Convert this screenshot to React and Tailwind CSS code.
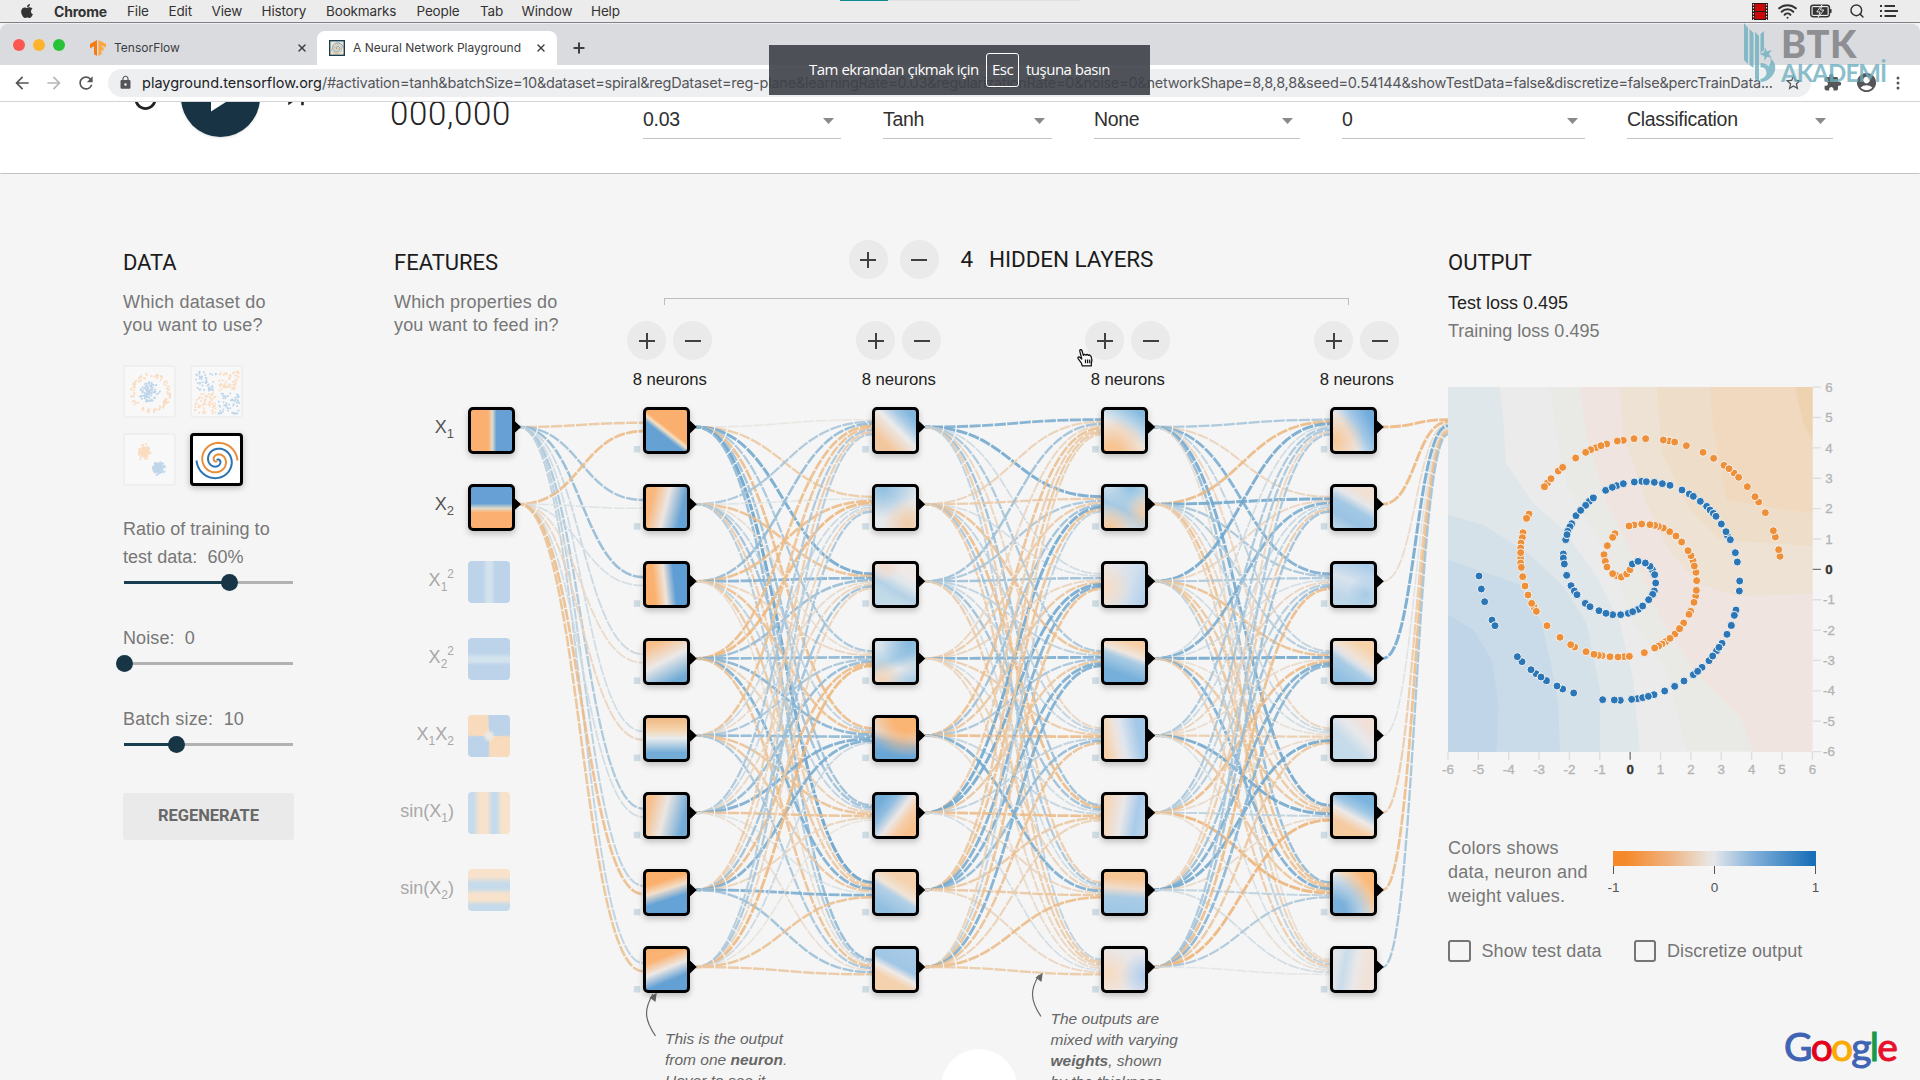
import React from "react";
import { Wifi, Search, X, Plus } from "lucide-react";
import { MdExtension, MdAccountCircle, MdStarBorder, MdLock, MdRefresh, MdArrowBack, MdArrowForward, MdReplay, MdSkipNext } from "react-icons/md";
import { FaApple } from "react-icons/fa";

/* ---------- network geometry (canvas origin: 394,396 on the page) ---------- */
const PITCH = 77.15;
const LAYER_LEFT = [249.3, 477.8, 707.7, 936.3];
const rowY = (i) => 31 + i * PITCH;

function lerpColor(w) {
  const base = [230, 231, 230];
  const end = w > 0 ? [34, 124, 188] : [242, 142, 40];
  const t = Math.min(1, Math.abs(w) * 1.1);
  const c = base.map((b, i) => Math.round(b + (end[i] - b) * t));
  return `rgb(${c[0]},${c[1]},${c[2]})`;
}

const W0 = [
  [-0.35, 0.35, 0.4, 0.15, 0.12, 0.3, 0.22, 0.2],
  [-0.45, 0.05, 0.1, -0.15, -0.2, 0.12, -0.45, -0.4],
];
const W1 = [
  [-0.04, -0.32, 0.55, 0.3, -0.45, 0.35, 0.6, 0.4],
  [0.3, 0.04, -0.42, -0.12, 0.2, 0.35, -0.3, 0.25],
  [0.4, -0.45, 0.48, -0.2, -0.4, 0.2, -0.35, -0.12],
  [-0.45, -0.5, 0.38, 0.45, 0.45, -0.25, 0.5, -0.4],
  [-0.4, 0.15, -0.15, 0.3, 0.42, -0.4, -0.35, 0.3],
  [0.3, 0.15, -0.2, 0.4, 0.52, -0.4, 0.06, -0.12],
  [-0.3, -0.2, 0.35, -0.45, 0.5, -0.22, 0.5, 0.35],
  [0.25, 0.3, -0.22, -0.5, 0.15, -0.06, -0.4, -0.35],
];
const W2 = [
  [0.5, 0.55, 0.12, 0.3, -0.2, 0.35, -0.3, 0.2],
  [-0.25, -0.3, 0.1, -0.4, 0.2, -0.45, 0.3, -0.3],
  [0.35, 0.3, 0.35, 0.2, 0.15, 0.35, 0.12, -0.3],
  [-0.2, -0.3, -0.2, 0.5, -0.3, 0.12, -0.25, -0.2],
  [-0.42, 0.35, -0.35, 0.3, -0.45, 0.18, 0.5, -0.15],
  [-0.3, 0.55, 0.55, -0.35, 0.2, -0.45, -0.2, 0.1],
  [-0.35, -0.4, 0.5, 0.5, 0.4, -0.35, -0.35, -0.2],
  [-0.25, 0.2, -0.4, 0.5, -0.4, -0.25, -0.45, -0.32],
];
const W3 = [
  [0.3, -0.22, 0.5, 0.2, -0.2, 0.55, 0.4, -0.12],
  [-0.48, 0.55, 0.3, 0.25, 0.15, -0.2, -0.4, -0.25],
  [0.55, -0.2, 0.28, -0.4, 0.12, -0.35, -0.4, 0.2],
  [0.12, 0.5, 0.1, 0.55, -0.1, -0.35, 0.5, -0.3],
  [0.3, 0.15, -0.2, -0.15, -0.28, 0.55, -0.35, 0.08],
  [0.3, 0.2, 0.25, -0.45, -0.15, 0.2, -0.52, -0.12],
  [-0.2, -0.3, 0.35, 0.5, 0.55, -0.15, 0.2, 0.12],
  [0.3, 0.35, -0.45, 0.45, -0.35, -0.52, 0.28, 0.03],
];
const W4 = [[-0.5], [-0.5], [-0.15], [0.55], [0.06], [-0.3], [-0.45], [0.32]];

function linksFor(weights, sx, tx) {
  const out = [];
  weights.forEach((row, i) =>
    row.forEach((w, j) => {
      const y1 = rowY(i);
      const n = weights.length;
      const y2 = rowY(j) + ((i - (n - 1) / 2) / n) * 16.8;
      const mx = (sx + tx) / 2;
      out.push({ d: `M${sx},${y1}C${mx},${y1} ${mx},${y2} ${tx},${y2}`, w });
    })
  );
  return out;
}

const LINKS = [
  ...linksFor(W0, 125, 249),
  ...linksFor(W1, 302, 478),
  ...linksFor(W2, 531, 708),
  ...linksFor(W3, 760, 936),
  ...linksFor(W4, 989, 1054),
];

const NODE_BG = [
  [
    "bg-[linear-gradient(218deg,#fbaf6e_46%,#f6e0c4_52%,#66a1d4_60%)]",
    "bg-[linear-gradient(104deg,#f9b77c_18%,#ece6e2_48%,#65a1d4_82%)]",
    "bg-[linear-gradient(84deg,#fbb06e_22%,#f0e4d8_46%,#5f9dd5_68%)]",
    "bg-[linear-gradient(153deg,#f8bf8b_12%,#ebe9e8_48%,#6faad6_88%)]",
    "bg-[linear-gradient(180deg,#f1bd88_5%,#f5d6b0_30%,#e7ebee_50%,#73acd6_85%)]",
    "bg-[linear-gradient(104deg,#f7bf8c_12%,#ebe6e2_45%,#72abd7_86%)]",
    "bg-[linear-gradient(162deg,#fbb06c_26%,#f3dfca_44%,#65a3d6_64%)]",
    "bg-[linear-gradient(158deg,#fbb374_26%,#ede8e4_48%,#63a0d4_72%)]",
  ],
  [
    "bg-[linear-gradient(225deg,#82b7dd_12%,#a9cbe6_28%,#ecebec_46%,#f3c79d_78%)]",
    "bg-[radial-gradient(circle_at_80%_90%,#f2cba6,transparent_50%),radial-gradient(circle_at_20%_0%,#8fbfe1,transparent_60%),linear-gradient(165deg,#c9dce9_5%,#e5e8ea_50%,#e8e6ea_100%)]",
    "bg-[radial-gradient(circle_at_25%_5%,#f1d9cb,transparent_32%),linear-gradient(210deg,#eee9e7_25%,#dfe6eb_40%,#b4d1e6_60%,#c2dae8_75%)]",
    "bg-[radial-gradient(circle_at_15%_95%,#f3d3b8,transparent_42%),radial-gradient(circle_at_85%_5%,#86b9de,transparent_55%),linear-gradient(155deg,#d6e3ec_15%,#afd0e5_45%,#e6e8eb_65%,#a9cce4_95%)]",
    "bg-[radial-gradient(circle_at_75%_0%,#fab474_25%,transparent_75%),linear-gradient(190deg,#f2dcc6_15%,#dfe2e4_40%,#85b5dc_60%,#6aa6d5_85%)]",
    "bg-[linear-gradient(128deg,#72add9_15%,#92bee0_32%,#ece7e6_52%,#f6ceaa_68%,#f8c08c_85%)]",
    "bg-[linear-gradient(212deg,#f5d2ad_25%,#f0e4d8_45%,#b3d0e7_55%,#90bfe0_85%)]",
    "bg-[linear-gradient(208deg,#a8cbe6_8%,#a0c6e6_42%,#efeae6_56%,#f4d2ae_70%)]",
  ],
  [
    "bg-[radial-gradient(circle_at_20%_105%,#f7c492_15%,transparent_68%),linear-gradient(215deg,#86bbe0_10%,#c1d9e9_35%,#ecebed_55%)]",
    "bg-[radial-gradient(circle_at_15%_100%,#f5c79a,transparent_45%),radial-gradient(circle_at_100%_60%,#f5cda8,transparent_42%),radial-gradient(circle_at_65%_0%,#8ec0e2,transparent_50%),linear-gradient(205deg,#d5e2ea_25%,#a4c9e4_55%,#dfe5ea_90%)]",
    "bg-[radial-gradient(circle_at_0%_60%,#f7dcc2,transparent_60%),linear-gradient(110deg,#e5e6ea_20%,#d2e0ee_60%,#b3d0ea_95%)]",
    "bg-[linear-gradient(200deg,#f6cfa4_12%,#efe6df_34%,#a9cbe4_46%,#76b0da_75%)]",
    "bg-[linear-gradient(78deg,#f6d0aa_8%,#efe2d8_32%,#e1e6ee_46%,#a3c8e8_80%)]",
    "bg-[linear-gradient(100deg,#f5d5b6_8%,#e9e7e9_44%,#a8cbea_75%,#bcd4e8_95%)]",
    "bg-[linear-gradient(184deg,#f7c695_18%,#f1dccb_40%,#a9cce6_62%,#a0c8e4_90%)]",
    "bg-[radial-gradient(circle_at_100%_65%,#aecbeb,transparent_50%),radial-gradient(circle_at_10%_60%,#f6dbc0,transparent_58%),linear-gradient(100deg,#ece6e6,#e8e8ec)]",
  ],
  [
    "bg-[radial-gradient(circle_at_0%_75%,#f9c490,transparent_60%),linear-gradient(240deg,#6fabdb_12%,#a9cbe8_42%,#eae9ec_62%)]",
    "bg-[linear-gradient(210deg,#f1e1d2_18%,#e6e6ea_35%,#a2c8e4_52%,#9ac3e3_75%,#bad5e8_95%)]",
    "bg-[radial-gradient(circle_at_80%_75%,#a6cbe6,transparent_42%),linear-gradient(200deg,#abcdea_10%,#d8e3ee_45%,#bdd6e8_80%)]",
    "bg-[linear-gradient(215deg,#f7d2ab_18%,#f1e2d4_40%,#dfe3e8_50%,#a9cce6_62%,#8fbfe0_88%)]",
    "bg-[linear-gradient(225deg,#f2dfd5_15%,#e6e8eb_40%,#c6dcea_62%,#c3daea_90%)]",
    "bg-[linear-gradient(208deg,#7db4de_18%,#9fc7e4_35%,#ece9e8_52%,#f6cba0_72%)]",
    "bg-[radial-gradient(circle_at_0%_100%,#79b1dc_22%,transparent_72%),linear-gradient(235deg,#fbb878_18%,#f4d0ac_38%,#eceaea_58%)]",
    "bg-[linear-gradient(100deg,#dde5ea_15%,#c9dceb_30%,#ebe8e8_55%,#f0e2d8_80%)]",
  ],
];

const SUB = "relative top-[5px] align-baseline text-[12px]";
const SUP = "relative top-[-8px] align-baseline text-[12px]";
const INACTIVE = [
  { label: <>X<sub className={SUB}>1</sub><sup className={SUP}>2</sup></>, bg: "bg-[linear-gradient(90deg,#bdd3ea_35%,#d3e3ee_47%,#d3e3ee_55%,#bdd3ea_65%)]" },
  { label: <>X<sub className={SUB}>2</sub><sup className={SUP}>2</sup></>, bg: "bg-[linear-gradient(180deg,#bdd3ea_35%,#d3e3ee_47%,#d3e3ee_55%,#bdd3ea_65%)]" },
  { label: <>X<sub className={SUB}>1</sub>X<sub className={SUB}>2</sub></>, bg: "bg-[radial-gradient(circle,#eeeae2_8%,transparent_22%),conic-gradient(#bdd3ea_0_24%,#f8dabd_26%_49%,#bdd3ea_51%_74%,#f8dabd_76%_99%,#bdd3ea)]" },
  { label: <>sin(X<sub className={SUB}>1</sub>)</>, bg: "bg-[linear-gradient(90deg,#c5dbeb_12%,#f8e2cb_28%,#f8e2cb_45%,#c5dbeb_58%,#c5dbeb_68%,#f8e2cb_80%)]" },
  { label: <>sin(X<sub className={SUB}>2</sub>)</>, bg: "bg-[linear-gradient(180deg,#f8e2cb_18%,#c5dbeb_34%,#c5dbeb_46%,#f8e2cb_60%,#f8e2cb_74%,#c5dbeb_86%)]" },
];

const ORANGE = [1080,560,1076,540,1066,502,1060,483,1036,429,1016,397,1005,381,982,351,942,310,956,323,912,287,927,297,881,266,849,248,799,228,747,214,764,217,730,211,677,207,642,207,610,212,592,214,560,223,528,234,543,228,512,240,497,248,467,265,415,304,428,293,382,340,393,327,373,351,327,433,320,446,309,489,307,504,303,520,302,535,302,565,302,549,302,580,304,593,308,621,315,649,324,676,342,712,335,701,349,725,381,768,420,803,464,832,452,825,498,846,546,858,535,857,522,854,570,861,612,861,594,862,628,860,673,849,737,816,726,823,716,829,704,835,765,793,750,806,791,760,779,777,812,725,807,734,827,679,822,698,829,662,819,573,828,608,830,633,823,589,813,558,804,543,785,517,768,499,749,486,730,475,715,470,704,467,642,466,690,465,665,463,627,469,585,492,578,503,552,555,562,528,556,575,561,592,590,618,578,612,604,622,620,613,630,600];
const BLUE = [177,619,184,658,194,696,216,751,225,768,306,876,292,861,348,912,333,900,379,933,363,922,428,958,411,949,461,970,548,990,601,992,583,991,652,987,668,984,635,989,702,975,685,980,734,964,764,950,792,934,820,915,846,893,833,905,867,873,890,843,878,859,906,821,897,833,921,794,934,767,948,721,943,737,958,664,959,634,952,577,946,549,922,497,931,510,918,486,904,463,860,410,870,421,880,431,888,440,808,373,841,395,820,380,786,361,750,347,727,342,703,338,665,335,679,336,643,337,590,348,610,342,557,362,577,353,508,395,497,407,520,385,468,438,482,422,455,462,450,471,437,510,443,485,441,495,430,553,430,565,433,583,440,617,453,648,463,664,471,675,496,701,510,711,537,723,578,735,558,731,602,735,625,731,655,719,638,726,668,709,703,664,698,674,686,690,707,640,697,600,704,615,690,590,637,583,676,580,654,575];

function Dots({ pts, fill }) {
  const out = [];
  for (let i = 0; i < pts.length; i += 2)
    out.push(<circle key={i} cx={pts[i]} cy={pts[i + 1]} r="12" fill={fill} stroke="#f3f3f3" strokeWidth="3" />);
  return <>{out}</>;
}

function rng(seed) {
  let s = seed;
  return () => ((s = (s * 16807) % 2147483647) / 2147483647);
}

function Thumb({ kind }) {
  const r = rng(kind.length * 977 + 5);
  const dots = [];
  const O = "#fbdcc0", B = "#bfd6ea";
  if (kind === "circle") {
    for (let i = 0; i < 110; i++) {
      const a = r() * 6.283, q = r() * 10.5;
      dots.push([26.5 + q * Math.cos(a), 27 + q * Math.sin(a), B]);
      const b = r() * 6.283, p = 15.5 + r() * 4.5;
      dots.push([27.5 + p * Math.cos(b), 28 + p * Math.sin(b), O]);
    }
  } else if (kind === "xor") {
    for (let i = 0; i < 250; i++) {
      const x = 5 + r() * 44, y = 6 + r() * 43;
      if (Math.abs(x - 27) < 1.2 || Math.abs(y - 27) < 1.2) continue;
      dots.push([x, y, (x < 27) === (y < 27) ? B : O]);
    }
  } else {
    for (let i = 0; i < 110; i++) {
      const g = () => (r() + r() + r() - 1.5) * 5.6;
      dots.push([20.5 + g(), 19 + g(), O]);
      dots.push([35.5 + g(), 35 + g(), B]);
    }
  }
  return (
    <div className="h-[53px] w-[53px] rounded-[3px] border-2 border-[#efefef] bg-[#f8f8f8]">
      <svg viewBox="2 2 49 49" className="block h-[49px] w-[49px]">
        {dots.map((d, i) => <circle key={i} cx={d[0]} cy={d[1]} r="1" fill={d[2]} />)}
      </svg>
    </div>
  );
}

function spiral(delta) {
  let d = "";
  for (let i = 2; i <= 120; i++) {
    const u = i / 120, t = 1.75 * u * 2 * Math.PI + delta, q = u * 20.5;
    d += `${i === 2 ? "M" : "L"}${(27 - q * Math.sin(t)).toFixed(2)},${(27.5 + q * Math.cos(t)).toFixed(2)}`;
  }
  return d;
}

function RoundBtn({ minus }) {
  return (
    <div className="flex h-[39px] w-[39px] items-center justify-center rounded-full bg-[#eaeaea]">
      <svg viewBox="0 0 18 18" className="h-[18px] w-[18px]" stroke="#404040" strokeWidth="2">
        <path d={minus ? "M1 9h16" : "M1 9h16M9 1v16"} />
      </svg>
    </div>
  );
}

function Select({ value, w }) {
  return (
    <div className={`flex h-[37px] items-start justify-between border-b-[1.5px] border-[#c4c4c4] pt-[4px] pr-[7px] ${w}`}>
      <span className="text-[19.500px] leading-[26px] tracking-[-0.300px] text-[#303030]">{value}</span>
      <svg viewBox="0 0 11 6" className="mt-[12px] h-[6px] w-[11px]"><path d="M0 0h11L5.500 6z" fill="#8a8a8a" /></svg>
    </div>
  );
}

function Slider({ left, fillW }) {
  return (
    <div className="relative ml-px h-[17px] w-[169px]">
      <div className="absolute top-[7px] h-[3px] w-full bg-[#b2b2b2]" />
      <div className={`absolute top-[7px] h-[3px] bg-[#183d4e] ${fillW}`} />
      <div className={`absolute top-0 h-[17px] w-[17px] rounded-full bg-[#183546] ${left}`} />
    </div>
  );
}

function Node({ bg }) {
  return <div className={`h-[47px] w-[47px] rounded-[5px] border-[3px] border-black shadow-[0_3px_6px_rgba(0,0,0,0.22)] ${bg}`} />;
}

const MENU = [["File", "w-[41.5px]"], ["Edit", "w-[43px]"], ["View", "w-[50px]"], ["History", "w-[64.500px]"], ["Bookmarks", "w-[90.500px]"], ["People", "w-[63.500px]"], ["Tab", "w-[41.500px]"], ["Window", "w-[69.500px]"], ["Help", "w-[60px]"]];

function MenuBar() {
  return (
    <div className="flex h-[23px] items-center border-b border-[#808086] bg-[#ececec] font-['Inter'] text-[13.500px] text-[#333]">
      <FaApple className="ml-[20px] h-[16px] w-[14px]" />
      <span className="ml-[20px] w-[73px] text-[14px] font-bold tracking-[-0.200px]">Chrome</span>
      {MENU.map(([m, w]) => <span key={m} className={`shrink-0 tracking-[-0.150px] ${w}`}>{m}</span>)}
      <div className="mr-[22px] ml-auto flex items-center">
        <svg viewBox="0 0 16 17" className="mr-[9px] h-[17px] w-[16px]">
          <rect width="16" height="17" fill="#2a1414" /><rect x="3" y="1" width="10" height="7" fill="#cc0707" /><rect x="3" y="9" width="10" height="7" fill="#cc0707" />
          <path d="M1.500 1v16M14.500 1v16" stroke="#ddd" strokeWidth="1.200" strokeDasharray="1.500 1.500" />
        </svg>
        <Wifi className="mr-[12px] h-[20px] w-[21px]" strokeWidth={2.4} />
        <svg viewBox="0 0 24 14" className="mr-[16px] h-[14px] w-[23px]">
          <rect x="0.800" y="1" width="19.500" height="12" rx="2.500" fill="none" stroke="#333" strokeWidth="1.500" />
          <rect x="2.800" y="3" width="15.500" height="8" fill="#333" /><path d="M21.500 5v4" stroke="#333" strokeWidth="2" />
          <path d="M12.500 0.500L7 8h3.500L8.500 13.500 14.500 6H11z" fill="#333" stroke="#ececec" strokeWidth="1" />
        </svg>
        <Search className="mr-[15px] h-[16px] w-[16px]" strokeWidth={2.2} />
        <svg viewBox="0 0 18 12" className="h-[12px] w-[18px]" stroke="#333" strokeWidth="2"><path d="M0 1h2M4.500 1H15M0 6h2M4.500 6H18M0 11h2M4.500 11H16" /></svg>
      </div>
    </div>
  );
}

function Tabs() {
  return (
    <div className="flex h-[42px] items-end rounded-t-lg border-t border-[#f0f0f2] bg-[#dadbdf] font-['Inter'] text-[12px] text-[#3c3c40]">
      <div className="mb-[14px] ml-[13px] flex gap-[8px]">
        <i className="h-[12px] w-[12px] rounded-full bg-[#fc5650]" /><i className="h-[12px] w-[12px] rounded-full bg-[#fdb42c]" /><i className="h-[12px] w-[12px] rounded-full bg-[#28c238]" />
      </div>
      <div className="flex h-[34px] w-[252px] items-center pl-[25px]">
        <svg viewBox="0 0 16 16" className="h-[16px] w-[16px]"><path d="M0 4l7-4v16l-3-1.800V6.200L0 8.300z" fill="#f57c14" /><path d="M16 4L8.500 0v16l3-1.800V9.700l2 1.200V7.700l-2-1.200V5.400L16 7.600z" fill="#fca63c" /></svg>
        <span className="ml-[8px] w-[182px]">TensorFlow</span>
        <X className="h-[12px] w-[12px]" strokeWidth={2.8} />
      </div>
      <div className="flex h-[34px] w-[240px] items-center rounded-t-lg bg-white pl-[12px]">
        <svg viewBox="0 0 53 53" className="h-[16px] w-[16px]"><rect x="2" y="2" width="49" height="49" fill="#e9e5d8" stroke="#183d4e" strokeWidth="5" /><path d={spiral(0)} fill="none" stroke="#4a90c4" strokeWidth="3" /><path d={spiral(Math.PI)} fill="none" stroke="#d9a66c" strokeWidth="3" /></svg>
        <span className="ml-[8px] w-[182px] whitespace-nowrap">A Neural Network Playground</span>
        <X className="h-[12px] w-[12px]" strokeWidth={2.8} />
      </div>
      <Plus className="mb-[9px] ml-[14px] h-[16px] w-[16px]" strokeWidth={3} />
    </div>
  );
}

function Toolbar() {
  return (
    <div className="flex h-[37px] items-center border-b border-[#d4d4d6] bg-white pb-px text-[#55565a]">
      <MdArrowBack className="ml-[12px] h-[20px] w-[20px]" />
      <MdArrowForward className="ml-[12px] h-[20px] w-[20px] text-[#b8b8ba]" />
      <MdRefresh className="ml-[12px] h-[20px] w-[20px]" />
      <div className="ml-[12px] flex h-[28px] w-[1703px] items-center rounded-full bg-[#eeeff1] pl-[10px]">
        <MdLock className="h-[15px] w-[15px]" />
        <span className="ml-[9px] w-[1642px] shrink-0 font-['Inter'] text-[14.500px] tracking-[-0.240px] whitespace-nowrap">
          <span className="tracking-normal text-[#202124]">playground.tensorflow.org</span>/#activation=tanh&amp;batchSize=10&amp;dataset=spiral&amp;regDataset=reg-plane&amp;learningRate=0.03&amp;regularizationRate=0&amp;noise=0&amp;networkShape=8,8,8,8&amp;seed=0.54144&amp;showTestData=false&amp;discretize=false&amp;percTrainData...
        </span>
        <MdStarBorder className="h-[19px] w-[19px] shrink-0" />
      </div>
      <MdExtension className="ml-[12px] h-[19px] w-[19px]" />
      <MdAccountCircle className="ml-[13px] h-[23px] w-[23px]" />
      <svg viewBox="0 0 4 14" className="ml-[18px] h-[14px] w-[4px]" fill="#55565a"><circle cx="2" cy="2" r="1.500" /><circle cx="2" cy="7" r="1.500" /><circle cx="2" cy="12" r="1.500" /></svg>
    </div>
  );
}

function Controls() {
  return (
    <div className="relative z-10 h-[72px] overflow-hidden">
      <div className="flex h-[71px] items-start bg-white shadow-[0_1px_2px_rgba(0,0,0,0.300)]">
        <div className="flex h-[71px] w-[390px] items-start">
          <MdReplay className="-mt-[21px] ml-[129px] h-[33px] w-[33px] text-[#222]" />
          <div className="-mt-[44px] ml-[19px] flex h-[79px] w-[79px] items-center justify-center rounded-full bg-[#183444] shadow">
            <svg viewBox="0 0 24 28" className="ml-[5px] h-[29px] w-[24px]"><path d="M0 0l22 14L0 28z" fill="#fff" /></svg>
          </div>
          <MdSkipNext className="-mt-[20px] ml-[19px] h-[31px] w-[34px] text-[#222]" />
        </div>
        <div className="-mt-[9px] w-[253px] font-['Roboto'] text-[33px] leading-[42px] font-light tracking-[0.700px] text-[#222]">000,000</div>
        <div className="flex gap-[42px]">
          <Select value="0.03" w="w-[198px]" />
          <Select value="Tanh" w="w-[169px]" />
          <Select value="None" w="w-[206px]" />
          <Select value="0" w="w-[243px]" />
          <Select value="Classification" w="w-[206px]" />
        </div>
      </div>
    </div>
  );
}

function DataColumn() {
  return (
    <div className="w-[270.500px] text-[18px] text-[#777]">
      <h2 className="font-['Roboto'] text-[22px] leading-[26px] tracking-[-0.100px] text-[#1c1c1c]">DATA</h2>
      <p className="mt-[15px] leading-[23px] tracking-[0.230px]">Which dataset do<br />you want to use?</p>
      <div className="mt-[28px] grid w-[121px] grid-cols-[53px_53px] gap-x-[14px] gap-y-[15px]">
        <Thumb kind="circle" />
        <Thumb kind="xor" />
        <Thumb kind="gauss" />
        <div className="h-[53px] w-[53px] rounded-[4px] border-[3px] border-black bg-white shadow-[0_2px_6px_rgba(0,0,0,0.25)]">
          <svg viewBox="3 3 47 47" className="block h-[47px] w-[47px]" fill="none" strokeWidth="2">
            <path d={spiral(Math.PI)} stroke="#2a74b4" /><path d={spiral(0)} stroke="#e58e3c" />
          </svg>
        </div>
      </div>
      <p className="mt-[29px] leading-[28px] tracking-[0.030px]">Ratio of training to<br />test data:&nbsp; 60%</p>
      <div className="mt-[3px]"><Slider fillW="w-[105px]" left="left-[97px]" /></div>
      <p className="mt-[33px] leading-[28px] tracking-[0.100px]">Noise:&nbsp; 0</p>
      <div className="mt-[3px]"><Slider fillW="w-0" left="left-[-8px]" /></div>
      <p className="mt-[33px] leading-[28px] tracking-[0.200px]">Batch size:&nbsp; 10</p>
      <div className="mt-[3px]"><Slider fillW="w-[52px]" left="left-[44px]" /></div>
      <div className="mt-[40px] flex h-[47px] w-[171px] items-center justify-center rounded-[3px] bg-[#eaeaea] font-['Roboto'] text-[16.500px] font-bold tracking-[-0.050px] text-[#686868]">REGENERATE</div>
    </div>
  );
}

function Network() {
  return (
    <div className="relative h-[685px] w-[1054px]">
      <svg viewBox="0 0 1054 685" className="absolute inset-0 h-[685px] w-[1054px]" fill="none">
        {LINKS.map((l, i) => (
          <path key={i} d={l.d} stroke={lerpColor(l.w)} strokeOpacity="0.88" strokeWidth={1.4 + Math.abs(l.w) * 2.9} strokeDasharray="11.200 1.400" strokeDashoffset="6" />
        ))}
        {LAYER_LEFT.map((x, l) =>
          NODE_BG[l].map((_, i) => (
            <g key={`${l}-${i}`}>
              <path d={`M${x + 46},${rowY(i) - 7}l7.5,7l-7.5,7z`} fill="#000" />
              <rect x={x - 9.5} y={rowY(i) + 19} width="6.500" height="6.500" fill="#cddbe3" />
            </g>
          ))
        )}
        {[0, 1].map((i) => <path key={i} d={`M119.5,${rowY(i) - 7}l7.500,7l-7.500,7z`} fill="#000" />)}
        <g stroke="#666" strokeWidth="1.200" transform="translate(0 -1)">
          <path d="M261.500 641C250 624 250 614 259 599" /><path d="M262 599l-1 7-4.500-3.500z" fill="#666" />
          <path d="M647 621.500C636 605 636 595 645 580" /><path d="M648 579l-1 7-4.500-3.500z" fill="#666" />
        </g>
      </svg>
      <div className="absolute top-[10.500px] left-0 flex w-[121px] flex-col gap-[30.150px]">
        {["1", "2"].map((n) => (
          <div key={n} className="flex h-[47px] items-start justify-end">
            <span className="mt-[10px] mr-[14px] text-[18px] leading-[20px] text-[#555]">X<sub className="relative top-[5px] align-baseline text-[13px]">{n}</sub></span>
            <Node bg={n === "1" ? "bg-[linear-gradient(90deg,#fbb072_42%,#e0dccb_52%,#66a0d4_62%)]" : "bg-[linear-gradient(180deg,#66a0d4_40%,#e0dccb_52%,#fbb072_62%)]"} />
          </div>
        ))}
        {INACTIVE.map((f, i) => (
          <div key={i} className="flex h-[47px] items-start justify-end pr-[5px]">
            <span className="mt-[9px] mr-[14px] text-[18px] leading-[20px] text-[#a8a8a8]">{f.label}</span>
            <div className={`h-[42px] w-[42px] rounded-[4px] ${f.bg}`} />
          </div>
        ))}
      </div>
      <div className="absolute top-[10.500px] left-[249.300px] flex gap-[182px]">
        {NODE_BG.map((col, l) => (
          <div key={l} className="flex flex-col gap-[30.150px]">{col.map((bg, i) => <Node key={i} bg={bg} />)}</div>
        ))}
      </div>
      <p className="absolute top-[632px] left-[271px] w-[140px] text-[15.500px] leading-[21px] text-[#666] italic">This is the output<br />from one <b>neuron</b>.<br />Hover to see it</p>
      <p className="absolute top-[612px] left-[656.500px] w-[150px] text-[15.500px] leading-[21px] text-[#666] italic">The outputs are<br />mixed with varying<br /><b>weights</b>, shown<br />by the thickness</p>
    </div>
  );
}

function Center() {
  return (
    <div className="ml-[0.500px] w-[1054px]">
      <div className="flex h-[146px]">
        <div className="w-[239px]">
          <h2 className="font-['Roboto'] text-[22px] leading-[26px] tracking-[0px] text-[#1c1c1c]">FEATURES</h2>
          <p className="mt-[15px] text-[18px] leading-[23px] tracking-[0.180px] text-[#777]">Which properties do<br />you want to feed in?</p>
        </div>
        <div className="w-[815px]">
          <div className="-mt-[10px] ml-[215.500px] flex items-center">
            <RoundBtn /><div className="w-[12px]" /><RoundBtn minus />
            <div className="-mt-[2px] ml-[22px] flex gap-[16px] font-['Roboto'] text-[22.500px] leading-[26px] tracking-[-0.100px] text-[#1c1c1c]"><span>4</span><span>HIDDEN LAYERS</span></div>
          </div>
          <div className="mt-[19px] ml-[31px] h-[7px] w-[685px] border-[1.500px] border-b-0 border-[#bdbdbd]" />
          <div className="mt-[16px] -ml-[6px] flex gap-[143.500px]">
            {[0, 1, 2, 3].map((i) => (
              <div key={i} className="flex w-[85.500px] flex-col items-center">
                <div className="flex gap-[7px]"><RoundBtn /><RoundBtn minus /></div>
                <span className="mt-[9px] text-[16.700px] leading-[22px] whitespace-nowrap text-[#222]">8 neurons</span>
              </div>
            ))}
          </div>
        </div>
      </div>
      <Network />
    </div>
  );
}

const BANDS_LEFT = [
  ["M84,52H390L410,200L440,350L520,480L590,620L640,760L740,900L800,1146H84z", "#ebebeb"],
  ["M84,52H240L250,150L258,280L340,400L430,480L530,620L600,760L640,930L660,1146H84z", "#e0e7ea"],
  ["M84,435L190,465L330,555L430,650L500,760L540,960L540,1146H84z", "#d5e1e9"],
  ["M84,570L200,610L300,645L365,760L392,880L415,1000L420,1146H84z", "#c9dae8"],
  ["M84,735L160,780L215,870L235,1000L230,1146H84z", "#c0d6e8"],
];
const BANDS_RIGHT = [
  ["M480,52L500,200L560,400L640,560L720,740L820,900L960,1040L1000,1146H1177V52z", "#efe4df"],
  ["M600,52L610,200L680,400L740,530L830,640L950,680L1177,672V52z", "#eee2d4"],
  ["M710,52L725,250L810,420L900,510L1177,530V52z", "#eedec9"],
  ["M870,52L880,180L920,390L1030,410L1177,430V52z", "#f0d9bf"],
  ["M1125,52L1150,160L1177,210V52z", "#efd2b0"],
];
const TICKS = [6, 5, 4, 3, 2, 1, 0, -1, -2, -3, -4, -5, -6];

function Output() {
  return (
    <div className="flex-1">
      <h2 className="font-['Roboto'] text-[22px] leading-[26px] tracking-[0px] text-[#1c1c1c]">OUTPUT</h2>
      <p className="mt-[13px] text-[18px] leading-[28px] text-[#222]">Test loss 0.495</p>
      <p className="text-[18px] leading-[28px] text-[#777]">Training loss 0.495</p>
      <svg viewBox="60 40 1200 1190" className="mt-[38px] -ml-[8px] block h-[396.700px] w-[400px]">
        <rect x="84" y="52" width="1093" height="1094" fill="#e9e9e5" />
        {[...BANDS_LEFT, ...BANDS_RIGHT].map((b, i) => <path key={i} d={b[0]} fill={b[1]} />)}
        <Dots pts={ORANGE} fill="#ef9038" />
        <Dots pts={BLUE} fill="#2a76b6" />
        {TICKS.map((t) => {
          const y = 599 - t * 91.1, x = 630.5 + t * 91.1, z = t === 0;
          return (
            <g key={t} className="font-['Liberation_Sans']" fontSize="40" fill={z ? "#333" : "#b4b4b4"} stroke={z ? "#333" : "#b4b4b4"} strokeWidth="1">
              <path d={`M1178,${y}h25M${x},1147v23`} stroke={z ? "#777" : "#ddd"} strokeWidth="4" />
              <text x="1227" y={y + 14} textAnchor="middle" fontWeight={z ? 700 : 400}>{t}</text>
              <text x={x} y="1214" textAnchor="middle" fontWeight={z ? 700 : 400}>{t}</text>
            </g>
          );
        })}
      </svg>
      <div className="mt-[56px] flex">
        <p className="w-[158px] text-[18px] leading-[24px] tracking-[0.220px] text-[#777]">Colors shows<br />data, neuron and<br />weight values.</p>
        <div className="mt-[15px] w-[217px]">
          <div className="ml-[7px] h-[15px] w-[203px] bg-[linear-gradient(90deg,#f5892a_6%,#efb17c_27%,#e8e4df_47%,#e3e6ea_50%,#7eaed8_70%,#1a6fb8_98%)]" />
          <div className="ml-[7px] flex h-[8px] w-[203px] justify-between"><i className="w-px bg-[#555]" /><i className="w-px bg-[#555]" /><i className="w-px bg-[#555]" /></div>
          <div className="mt-[5px] flex justify-between text-[13.500px] leading-[18px] text-[#555]"><span className="w-[15px] text-center">-1</span><span className="w-[15px] text-center">0</span><span className="w-[15px] text-center">1</span></div>
        </div>
      </div>
      <div className="mt-[32px] flex h-[23px] items-center text-[18px] tracking-[0.080px] text-[#757575]">
        <i className="mr-[11px] h-[22.500px] w-[22.500px] rounded-[3px] border-[2.500px] border-[#757575]" /><span className="w-[152px]">Show test data</span>
        <i className="mr-[11px] h-[22.500px] w-[22.500px] rounded-[3px] border-[2.500px] border-[#757575]" /><span>Discretize output</span>
      </div>
      <div className="mt-[56px] ml-[336px] flex font-['Lato'] text-[39px] leading-[54px] tracking-[-1.800px] [-webkit-text-stroke:1px]">
        <span className="text-[#3f64b4]">G</span><span className="text-[#e3001b]">o</span><span className="text-[#f9ab00]">o</span><span className="text-[#3f64b4]">g</span><span className="text-[#169a48]">l</span><span className="text-[#e8112d]">e</span>
      </div>
    </div>
  );
}

export default function App() {
  return (
    <div className="relative flex h-[1080px] w-[1920px] flex-col overflow-hidden bg-[#f5f5f5] font-['Liberation_Sans',sans-serif]">
      <MenuBar />
      <Tabs />
      <Toolbar />
      <Controls />
      <div className="flex h-[906px] items-start overflow-hidden pt-[76px] pl-[123px]">
        <DataColumn />
        <Center />
        <Output />
      </div>

      <div className="absolute top-[1049px] left-[941px] h-[76px] w-[76px] rounded-full bg-white" />
      <svg viewBox="0 0 16 18" className="absolute top-[348px] left-[1077px] z-20 h-[19px] w-[17px]" fill="#fff" stroke="#111" strokeWidth="1.200" strokeLinejoin="round">
        <path d="M5 17l-1-3-3-4c-.6-1.200.8-2 1.600-1.200L4.500 10.500 2.600 3c-.3-1.500 1.500-2 2-.6L6 7l.8-1 1.700.8.900-.8 1.500 1 1-.5 1.400 1.500.8 3.500-.6 3v2.500z" /><path d="M8 11v3.500M10 11v3.500M12 11v3.500" />
      </svg>

      <div className="absolute top-0 left-[840px] flex"><i className="h-px w-[48px] bg-[#0e8c90]" /><i className="h-px w-[192px] bg-[#e0e0e0]" /></div>
      <div className="absolute top-[45px] left-[769px] z-20 flex h-[50px] w-[381px] items-center bg-[#3e4048]/90 pb-px pl-[40px] font-['Open_Sans'] text-[15px] tracking-[-0.500px] text-white">
        <span className="w-[177px] whitespace-nowrap">Tam ekrandan çıkmak için</span>
        <span className="mr-[7px] flex h-[34px] w-[33px] shrink-0 items-center justify-center rounded-[3px] border border-white">Esc</span>
        <span className="whitespace-nowrap">tuşuna basın</span>
      </div>

      <div className="absolute top-[22px] left-[1743px] z-20 flex opacity-80">
        <svg viewBox="0 0 35 62" className="h-[62px] w-[35px]" fill="#6fb0c0">
          <path d="M1 1l4 5v36l-4-4zM6.500 7l4 4v35l-4-3zM12 10l4 4v46l-4-3zM17.500 12l3.500-3v19l-3.500 3z" />
          <path d="M22 25l1.800 4.600 5-1.600-3 4 3.200 4-5-1.300L21.500 39l-.3-5-4.700-2 4.700-1.800z" />
          <path d="M17.500 41c3 0 6 1 8 3 2-2 3-5 1.500-8 6 4 6.500 11 3.500 16-3 5-8 8-13 8v-3c3-.5 6-3 6-6.500s-3-5.500-6-5z" />
        </svg>
        <div className="ml-[3px] flex flex-col font-['Lato'] font-bold">
          <span className="h-[41px] text-[38px] leading-[42px] font-black tracking-[0.500px] text-[#7c7d81]">BTK</span>
          <span className="-mt-[2px] text-[24px] leading-[24px] tracking-[-0.900px] text-[#6fb0c0]">AKADEMİ</span>
        </div>
      </div>
    </div>
  );
}
